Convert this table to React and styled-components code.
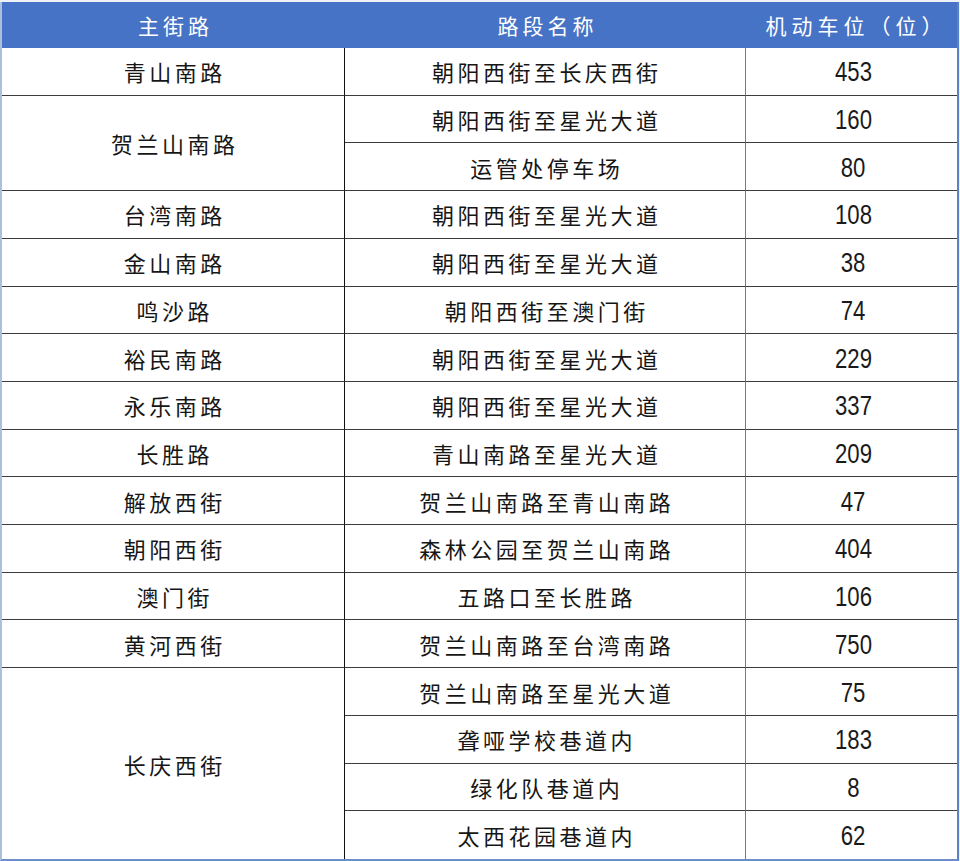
import React from 'react';
import styled, { createGlobalStyle } from 'styled-components';

const GlobalStyle = createGlobalStyle`
  html, body {
    margin: 0;
    padding: 0;
    background: #fff;
  }
  body {
    font-family: 'Noto Sans CJK SC', sans-serif;
  }
`;

const Page = styled.div`
  width: 960px;
  height: 861px;
  padding-top: 2px;
  box-sizing: border-box;
  background: #eef1f5;
  overflow: hidden;
`;

const Grid = styled.div`
  width: 959px;
  height: 859px;
  box-sizing: border-box;
  display: grid;
  grid-template-columns: 343px 401px 1fr;
  grid-template-rows: 46px repeat(17, 1fr);
  background: #fff;
  border-left: 2px solid #a9c0df;
  border-right: 2px solid #5b81c7;
  border-bottom: 2px solid #6b8ecb;
`;

const HeadCell = styled.div`
  display: flex;
  align-items: center;
  justify-content: center;
  background: #4673c6;
  color: #fff;
  font-family: 'Noto Sans CJK SC', sans-serif;
  font-size: 21px;
  letter-spacing: ${p => (p.$wide ? '5px' : '4px')};
  padding-left: ${p => (p.$wide ? '10px' : '4px')};
`;

const Cell = styled.div`
  display: flex;
  align-items: center;
  justify-content: center;
  box-sizing: border-box;
  border-bottom: ${p => (p.$last ? 'none' : '1px solid #3c3c3c')};
  border-right: ${p => (p.$col === 1 ? '1px solid #111' : p.$col === 2 ? '1px solid #7a7a7a' : 'none')};
  grid-row: ${p => (p.$span ? `span ${p.$span}` : 'auto')};
  color: #161616;
  font-family: 'Noto Sans CJK SC', sans-serif;
  font-size: 22px;
  letter-spacing: 3.5px;
  padding-left: 3.5px;
`;

const Num = styled.span`
  display: inline-block;
  font-family: 'Liberation Sans', Arial, sans-serif;
  font-size: 27px;
  letter-spacing: 0;
  margin-top: 3px;
  transform: scaleX(0.82);
  color: #1a1a1a;
`;

const groups = [
  { road: '青山南路', items: [['朝阳西街至长庆西街', 453]] },
  { road: '贺兰山南路', items: [['朝阳西街至星光大道', 160], ['运管处停车场', 80]] },
  { road: '台湾南路', items: [['朝阳西街至星光大道', 108]] },
  { road: '金山南路', items: [['朝阳西街至星光大道', 38]] },
  { road: '鸣沙路', items: [['朝阳西街至澳门街', 74]] },
  { road: '裕民南路', items: [['朝阳西街至星光大道', 229]] },
  { road: '永乐南路', items: [['朝阳西街至星光大道', 337]] },
  { road: '长胜路', items: [['青山南路至星光大道', 209]] },
  { road: '解放西街', items: [['贺兰山南路至青山南路', 47]] },
  { road: '朝阳西街', items: [['森林公园至贺兰山南路', 404]] },
  { road: '澳门街', items: [['五路口至长胜路', 106]] },
  { road: '黄河西街', items: [['贺兰山南路至台湾南路', 750]] },
  {
    road: '长庆西街',
    items: [
      ['贺兰山南路至星光大道', 75],
      ['聋哑学校巷道内', 183],
      ['绿化队巷道内', 8],
      ['太西花园巷道内', 62],
    ],
  },
];

const App = () => {
  return (
    <Page>
      <GlobalStyle />
      <Grid>
        <HeadCell>主街路</HeadCell>
        <HeadCell>路段名称</HeadCell>
        <HeadCell $wide>机动车位（位）</HeadCell>
        {groups.map((g, gi) => {
          const lastGroup = gi === groups.length - 1;
          return (
            <React.Fragment key={g.road}>
              <Cell $col={1} $span={g.items.length} $last={lastGroup}>
                {g.road}
              </Cell>
              {g.items.map(([seg, n], i) => {
                const last = lastGroup && i === g.items.length - 1;
                return (
                  <React.Fragment key={seg + i}>
                    <Cell $col={2} $last={last}>{seg}</Cell>
                    <Cell $col={3} $last={last}>
                      <Num>{n}</Num>
                    </Cell>
                  </React.Fragment>
                );
              })}
            </React.Fragment>
          );
        })}
      </Grid>
    </Page>
  );
};

export default App;
